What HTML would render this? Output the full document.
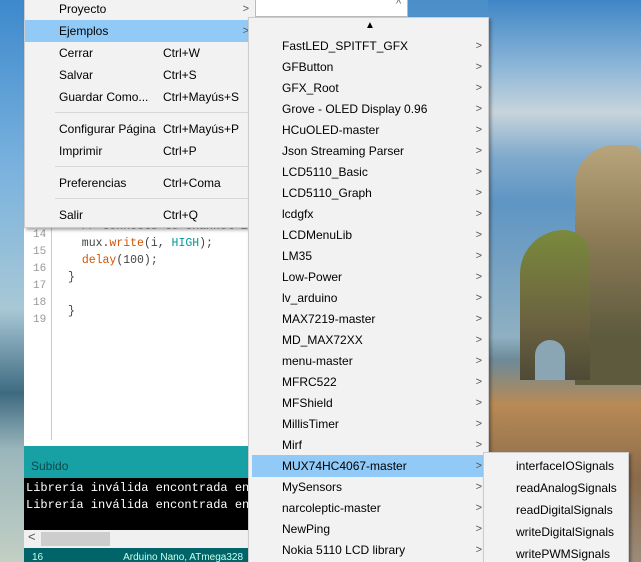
<!DOCTYPE html>
<html><head><meta charset="utf-8"><style>
*{margin:0;padding:0;box-sizing:border-box}
html,body{width:641px;height:562px;overflow:hidden}
body{position:relative;font-family:"Liberation Sans",sans-serif;font-size:12px;color:#000;
background:linear-gradient(180deg,#4a8fc9 0%,#7fb3dc 40%,#9ec4d8 60%,#5d8296 75%,#c9b8a0 90%,#b0a890 100%);}
.abs{position:absolute}
.menu{background:#f2f2f2;border:1px solid #ccc;box-shadow:2px 2px 3px rgba(0,0,0,.35);overflow:hidden}
.it{position:absolute;left:0;right:0;height:22px;line-height:22px}
.it .l{position:absolute;left:34px}
.it .s{position:absolute;left:138px}
.it .a{position:absolute;right:6px;color:#555;font-size:11px}
.sel{background:#91c9f7}
.sep{position:absolute;left:30px;right:4px;height:1px;background:#d7d7d7}
.sub .it .l{left:33px}
.code{font-family:"Liberation Mono",monospace;font-size:12px}
</style></head><body>
<div class="abs" style="left:488px;top:0;width:153px;height:562px;background:linear-gradient(180deg,#3f86c6 0%,#8db7d8 12%,#c7d4dc 20%,#7fa9cc 28%,#5f95c3 36%,#8fb0c2 60%,#6d8a98 64%,#b88a55 72%,#8a6b4b 85%,#9c8c7a 100%)"></div>
<div class="abs" style="left:575px;top:145px;width:66px;height:240px;background:linear-gradient(180deg,#b8a57c,#8b7a55 40%,#5d5a3e 80%);border-radius:40px 10px 0 0"></div>
<div class="abs" style="left:520px;top:230px;width:70px;height:150px;background:linear-gradient(180deg,#7a8a3c,#6c6340 60%,#4e4a36);border-radius:50px 30px 0 0"></div>
<div class="abs" style="left:535px;top:340px;width:30px;height:40px;background:#8aa6b5;border-radius:15px 15px 0 0"></div>
<div class="abs" style="left:0;top:0;width:24px;height:562px;background:linear-gradient(180deg,#3d89cc 0%,#7ab2de 30%,#a8c8d6 55%,#3e6a80 70%,#9ab6bc 80%,#c2cfc4 100%)"></div>

<div class="abs" style="left:24px;top:200px;width:224px;height:246px;background:#fff"></div>
<div class="abs" style="left:51px;top:200px;width:1px;height:240px;background:#ccc"></div>
<div class="abs code" style="left:33px;top:227px;color:#999;line-height:17px;font-size:11px">14<br>15<br>16<br>17<br>18<br>19</div>
<div class="abs code" style="left:68px;top:218px;line-height:17px;white-space:pre;color:#444;font-size:11.5px"><span style="color:#999">  // Connects to channel i</span>
  mux.<span style="color:#d35400">write</span>(i, <span style="color:#00979c">HIGH</span>);
  <span style="color:#d35400">delay</span>(100);
}

}</div>
<div class="abs" style="left:24px;top:446px;width:224px;height:32px;background:#17a1a5;color:#0a4a4d;padding:13px 0 0 7px;font-size:12px">Subido</div>
<div class="abs code" style="left:24px;top:478px;width:224px;height:52px;background:#000;color:#fff;padding:2px 0 0 2px;line-height:17px;white-space:pre;overflow:hidden">Librería inválida encontrada en
Librería inválida encontrada en</div>
<div class="abs" style="left:24px;top:530px;width:224px;height:18px;background:#f0f0f0"></div>
<div class="abs" style="left:41px;top:532px;width:69px;height:14px;background:#cdcdcd"></div>
<div class="abs" style="left:28px;top:529px;color:#555;font-size:13px">&lt;</div>
<div class="abs" style="left:24px;top:548px;width:224px;height:14px;background:#006468;color:#cfe;font-size:10px;padding:4px 0 0 8px;white-space:nowrap;overflow:hidden">16<span style="margin-left:80px">Arduino Nano, ATmega328</span></div>

<div class="abs menu" style="left:24px;top:-4px;width:232px;height:232px">
<div class="it" style="top:1px"><span class="l">Proyecto</span><span class="a">&gt;</span></div>
<div class="it sel" style="top:23px"><span class="l">Ejemplos</span><span class="a">&gt;</span></div>
<div class="it" style="top:45px"><span class="l">Cerrar</span><span class="s">Ctrl+W</span></div>
<div class="it" style="top:67px"><span class="l">Salvar</span><span class="s">Ctrl+S</span></div>
<div class="it" style="top:89px"><span class="l">Guardar Como...</span><span class="s">Ctrl+Mayús+S</span></div>
<div class="sep" style="top:115px"></div>
<div class="it" style="top:121px"><span class="l">Configurar Página</span><span class="s">Ctrl+Mayús+P</span></div>
<div class="it" style="top:143px"><span class="l">Imprimir</span><span class="s">Ctrl+P</span></div>
<div class="sep" style="top:169px"></div>
<div class="it" style="top:175px"><span class="l">Preferencias</span><span class="s">Ctrl+Coma</span></div>
<div class="sep" style="top:201px"></div>
<div class="it" style="top:207px"><span class="l">Salir</span><span class="s">Ctrl+Q</span></div>
</div>

<div class="abs" style="left:255px;top:0;width:153px;height:17px;background:#fff;border:1px solid #bbb;border-top:none"></div>
<div class="abs" style="left:396px;top:-2px;color:#666;font-size:11px">^</div>

<div class="abs menu sub" style="left:248px;top:17px;width:241px;height:550px">
<div class="abs" style="left:116px;top:2px;font-size:10px">▲</div>
<div class="it" style="top:17px"><span class="l">FastLED_SPITFT_GFX</span><span class="a">&gt;</span></div>
<div class="it" style="top:38px"><span class="l">GFButton</span><span class="a">&gt;</span></div>
<div class="it" style="top:59px"><span class="l">GFX_Root</span><span class="a">&gt;</span></div>
<div class="it" style="top:80px"><span class="l">Grove - OLED Display 0.96</span><span class="a">&gt;</span></div>
<div class="it" style="top:101px"><span class="l">HCuOLED-master</span><span class="a">&gt;</span></div>
<div class="it" style="top:122px"><span class="l">Json Streaming Parser</span><span class="a">&gt;</span></div>
<div class="it" style="top:143px"><span class="l">LCD5110_Basic</span><span class="a">&gt;</span></div>
<div class="it" style="top:164px"><span class="l">LCD5110_Graph</span><span class="a">&gt;</span></div>
<div class="it" style="top:185px"><span class="l">lcdgfx</span><span class="a">&gt;</span></div>
<div class="it" style="top:206px"><span class="l">LCDMenuLib</span><span class="a">&gt;</span></div>
<div class="it" style="top:227px"><span class="l">LM35</span><span class="a">&gt;</span></div>
<div class="it" style="top:248px"><span class="l">Low-Power</span><span class="a">&gt;</span></div>
<div class="it" style="top:269px"><span class="l">lv_arduino</span><span class="a">&gt;</span></div>
<div class="it" style="top:290px"><span class="l">MAX7219-master</span><span class="a">&gt;</span></div>
<div class="it" style="top:311px"><span class="l">MD_MAX72XX</span><span class="a">&gt;</span></div>
<div class="it" style="top:332px"><span class="l">menu-master</span><span class="a">&gt;</span></div>
<div class="it" style="top:353px"><span class="l">MFRC522</span><span class="a">&gt;</span></div>
<div class="it" style="top:374px"><span class="l">MFShield</span><span class="a">&gt;</span></div>
<div class="it" style="top:395px"><span class="l">MillisTimer</span><span class="a">&gt;</span></div>
<div class="it" style="top:416px"><span class="l">Mirf</span><span class="a">&gt;</span></div>
<div class="it sel" style="top:437px;left:3px"><span class="l" style="left:30px">MUX74HC4067-master</span><span class="a">&gt;</span></div>
<div class="it" style="top:458px"><span class="l">MySensors</span><span class="a">&gt;</span></div>
<div class="it" style="top:479px"><span class="l">narcoleptic-master</span><span class="a">&gt;</span></div>
<div class="it" style="top:500px"><span class="l">NewPing</span><span class="a">&gt;</span></div>
<div class="it" style="top:521px"><span class="l">Nokia 5110 LCD library</span><span class="a">&gt;</span></div>
</div>

<div class="abs menu" style="left:483px;top:452px;width:146px;height:115px">
<div class="it" style="top:2px"><span class="l" style="left:32px">interfaceIOSignals</span></div>
<div class="it" style="top:24px"><span class="l" style="left:32px">readAnalogSignals</span></div>
<div class="it" style="top:46px"><span class="l" style="left:32px">readDigitalSignals</span></div>
<div class="it" style="top:68px"><span class="l" style="left:32px">writeDigitalSignals</span></div>
<div class="it" style="top:90px"><span class="l" style="left:32px">writePWMSignals</span></div>
</div>
</body></html>
